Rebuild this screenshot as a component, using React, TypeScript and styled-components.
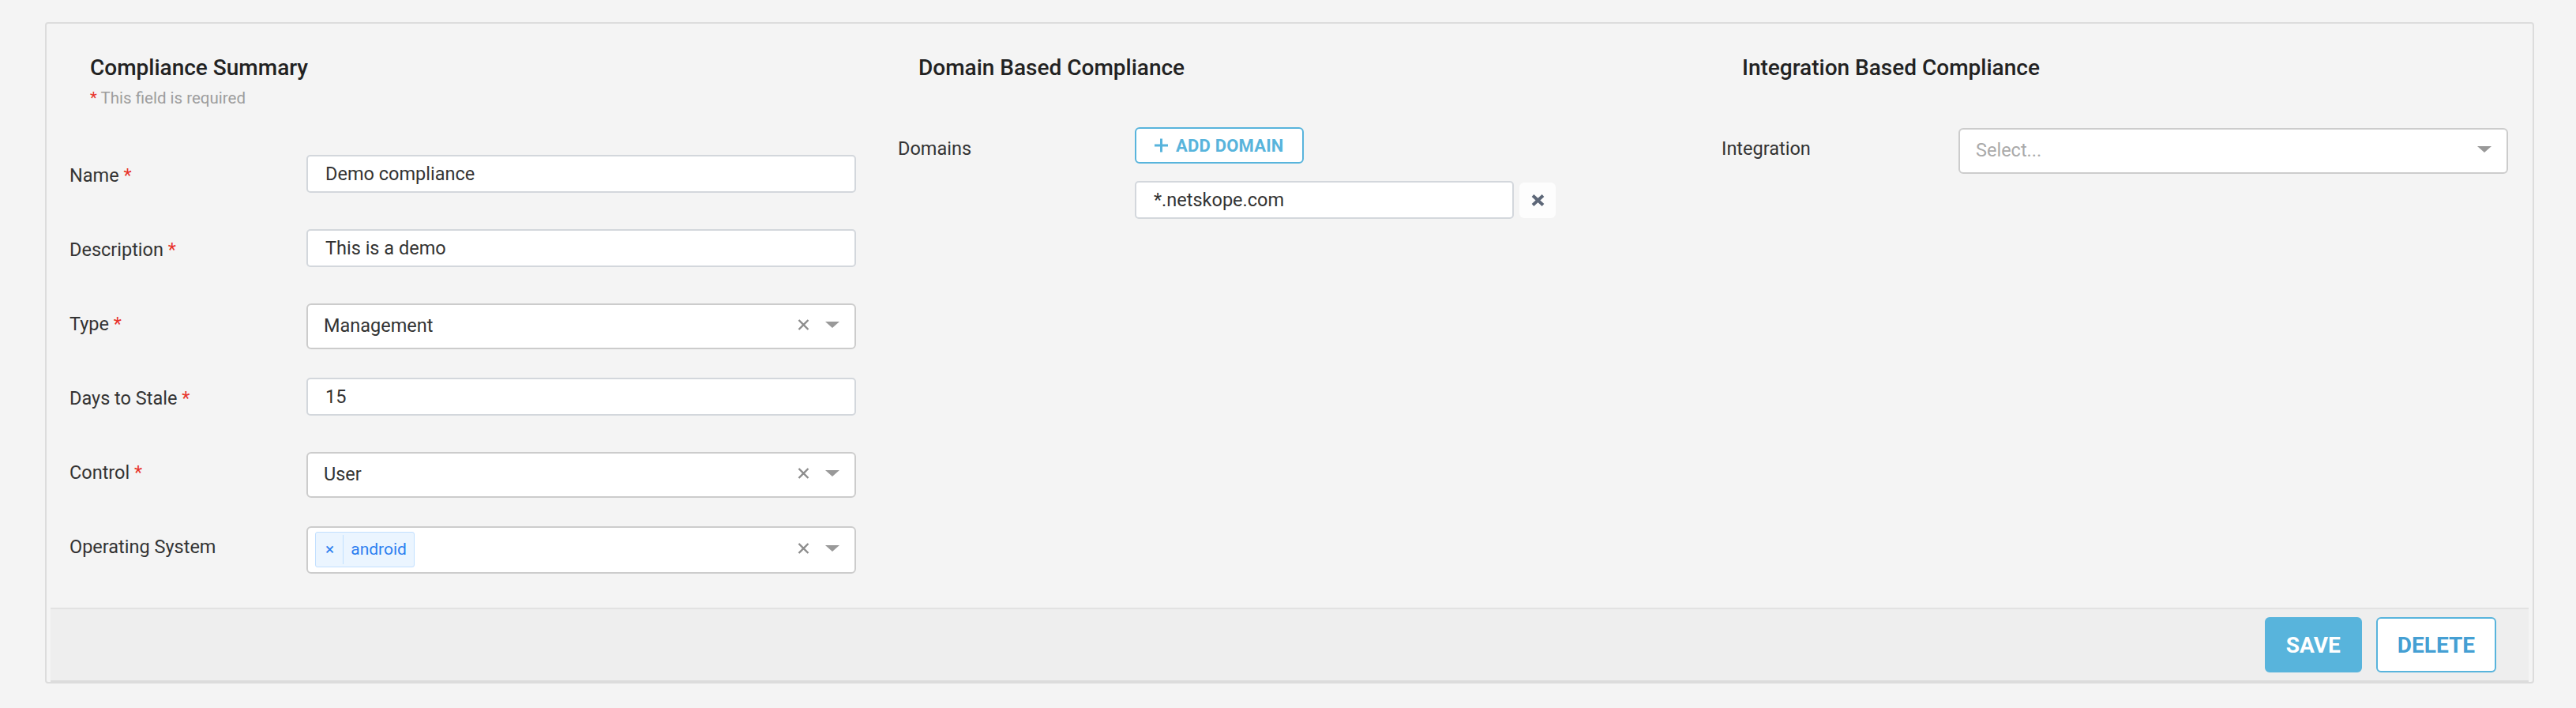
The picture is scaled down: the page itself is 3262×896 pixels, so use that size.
import React from "react";
import styled, { createGlobalStyle } from "styled-components";

const GlobalStyle = createGlobalStyle`
  html, body { margin: 0; padding: 0; background: #f4f4f4; }
  body { font-family: Roboto, "Liberation Sans", Arial, sans-serif; color: #333; }
  * { box-sizing: border-box; }
`;

const Page = styled.div`
  width: 3262px;
  min-height: 896px;
  padding: 28px 53px 30px 57px;
  background: #f4f4f4;
`;

const Panel = styled.section`
  border: 2px solid #dcdcdc;
  border-radius: 4px;
  background: #f4f4f4;
  padding: 0 5px;
`;

const Columns = styled.div`
  display: grid;
  grid-template-columns: repeat(3, 1fr);
  align-items: start;
`;

const Column = styled.div<{ $inset: number }>`
  padding: 40px 26px 9px ${(p) => p.$inset}px;
`;

const Header = styled.header`
  padding-left: 26px;
  margin-bottom: 60px;
`;

const Heading = styled.h2`
  margin: 0;
  font-size: 28px;
  line-height: 32px;
  font-weight: 500;
  color: #222;
`;

const Required = styled.div`
  margin-top: 10px;
  margin-bottom: 1px;
  font-size: 20.5px;
  line-height: 24px;
  color: #9d9d9d;
`;

const Star = styled.span`
  color: #e8342c;
`;

const Row = styled.div`
  display: grid;
  grid-template-columns: 300px 1fr;
  align-items: start;
  min-height: 94px;
`;

const Label = styled.label`
  font-size: 23.5px;
  line-height: 28px;
  padding-top: 12px;
  color: #333;
`;

const TextInput = styled.input`
  display: block;
  width: 100%;
  height: 48px;
  border: 2px solid #d3d7dc;
  border-radius: 5px;
  background: #fff;
  padding: 0 22px;
  font-family: inherit;
  font-size: 23.5px;
  color: #333;
  outline: none;
`;

const SelectBox = styled.div<{ $tall?: boolean; $multi?: boolean }>`
  display: flex;
  align-items: center;
  height: ${(p) => (p.$tall ? 60 : 58)}px;
  border: 2px solid #cccccc;
  border-radius: 6px;
  background: #fff;
  padding: 0 19px 0 ${(p) => (p.$multi ? 9 : 20)}px;
`;

const SelectValue = styled.div<{ $placeholder?: boolean }>`
  flex: 1;
  font-size: 23.5px;
  color: ${(p) => (p.$placeholder ? "#aaa" : "#333")};
  padding-bottom: 2px;
`;

const Values = styled.div`
  flex: 1;
  display: flex;
  align-items: center;
`;

const Tag = styled.div`
  display: flex;
  align-items: stretch;
  height: 45px;
  border: 1px solid #c2e0ff;
  border-radius: 3px;
  background: #ebf5ff;
  color: #2d7ff0;
  font-size: 21px;
  margin-top: -1px;
`;

const TagRemove = styled.span`
  display: flex;
  align-items: center;
  margin: 3px 0;
  padding: 0 11px 2px 12px;
  border-right: 1px solid #c2e0ff;
`;

const TagLabel = styled.span`
  display: flex;
  align-items: center;
  padding: 0 9px 2px 9px;
`;

const ClearIcon = styled.svg`
  display: block;
  width: 15px;
  height: 14px;
  margin-top: -5px;
`;

const Arrow = styled.span`
  display: block;
  width: 0;
  height: 0;
  margin-left: 20px;
  margin-top: -4px;
  border-style: solid;
  border-width: 8px 9.5px 0 9.5px;
  border-color: #999 transparent transparent transparent;
`;

const DomainStack = styled.div`
  display: flex;
  flex-direction: column;
  align-items: flex-start;
  gap: 22px;
  margin-top: -1px;
`;

const AddButton = styled.button`
  display: inline-flex;
  align-items: center;
  gap: 10px;
  height: 46px;
  width: 214px;
  padding: 0 0 0 23px;
  border: 2px solid #58b4dc;
  border-radius: 6px;
  background: #fff;
  color: #58b4dc;
  font-family: inherit;
  font-size: 22px;
  font-weight: 700;
  letter-spacing: 0.2px;
`;

const DomainRow = styled.div`
  display: flex;
  align-items: center;
  gap: 7px;
`;

const DomainInput = styled(TextInput)`
  width: 480px;
`;

const RemoveButton = styled.button`
  display: flex;
  align-items: center;
  justify-content: center;
  width: 46px;
  height: 45px;
  border: none;
  border-radius: 6px;
  background: #fdfdfd;
  padding: 0;
`;

const Footer = styled.footer`
  display: flex;
  justify-content: flex-end;
  gap: 18px;
  padding: 10px 41px 10px;
  border-top: 2px solid #e2e2e2;
  border-bottom: 2px solid #dcdcdc;
  background: #eeeeee;
`;

const ActionButton = styled.button<{ $primary?: boolean }>`
  height: 70px;
  padding: 0 25px;
  border: 2px solid #58b4dc;
  border-radius: 6px;
  background: ${(p) => (p.$primary ? "#58b4dc" : "#fff")};
  color: ${(p) => (p.$primary ? "#fff" : "#459fd3")};
  font-family: inherit;
  font-size: 28px;
  font-weight: 700;
`;

const Clear = () => (
  <ClearIcon viewBox="0 0 15 14">
    <path d="M1.5 1 L13.5 13 M13.5 1 L1.5 13" stroke="#8c8c8c" strokeWidth="2.3" fill="none" />
  </ClearIcon>
);

const Field: React.FC<{ label: string; required?: boolean; children: React.ReactNode }> = ({
  label,
  required,
  children,
}) => (
  <Row>
    <Label>
      {label}
      {required && <Star> *</Star>}
    </Label>
    <div>{children}</div>
  </Row>
);

export default function App() {
  return (
    <>
      <GlobalStyle />
      <Page>
        <Panel>
          <Columns>
            <Column $inset={24}>
              <Header>
                <Heading>Compliance Summary</Heading>
                <Required>
                  <Star>*</Star> This field is required
                </Required>
              </Header>
              <Field label="Name" required>
                <TextInput readOnly value="Demo compliance" />
              </Field>
              <Field label="Description" required>
                <TextInput readOnly value="This is a demo" />
              </Field>
              <Field label="Type" required>
                <SelectBox>
                  <SelectValue>Management</SelectValue>
                  <Clear />
                  <Arrow />
                </SelectBox>
              </Field>
              <Field label="Days to Stale" required>
                <TextInput readOnly value="15" />
              </Field>
              <Field label="Control" required>
                <SelectBox>
                  <SelectValue>User</SelectValue>
                  <Clear />
                  <Arrow />
                </SelectBox>
              </Field>
              <Field label="Operating System">
                <SelectBox $tall $multi>
                  <Values>
                    <Tag>
                      <TagRemove>×</TagRemove>
                      <TagLabel>android</TagLabel>
                    </Tag>
                  </Values>
                  <Clear />
                  <Arrow />
                </SelectBox>
              </Field>
            </Column>

            <Column $inset={27}>
              <Header>
                <Heading>Domain Based Compliance</Heading>
              </Header>
              <Field label="Domains">
                <DomainStack>
                  <AddButton>
                    <svg width="17" height="18" viewBox="0 0 17 18">
                      <path d="M8.5 0.5 V17.5 M0 9 H17" stroke="#58b4dc" strokeWidth="3" fill="none" />
                    </svg>
                    ADD DOMAIN
                  </AddButton>
                  <DomainRow>
                    <DomainInput readOnly value="*.netskope.com" />
                    <RemoveButton aria-label="remove">
                      <svg width="17" height="15" viewBox="0 0 17 15">
                        <path d="M2 1.5 L15 13.5 M15 1.5 L2 13.5" stroke="#5d6778" strokeWidth="4" fill="none" />
                      </svg>
                    </RemoveButton>
                  </DomainRow>
                </DomainStack>
              </Field>
            </Column>

            <Column $inset={24}>
              <Header>
                <Heading>Integration Based Compliance</Heading>
              </Header>
              <Field label="Integration">
                <SelectBox>
                  <SelectValue $placeholder>Select...</SelectValue>
                  <Arrow />
                </SelectBox>
              </Field>
            </Column>
          </Columns>
          <Footer>
            <ActionButton $primary>SAVE</ActionButton>
            <ActionButton>DELETE</ActionButton>
          </Footer>
        </Panel>
      </Page>
    </>
  );
}
